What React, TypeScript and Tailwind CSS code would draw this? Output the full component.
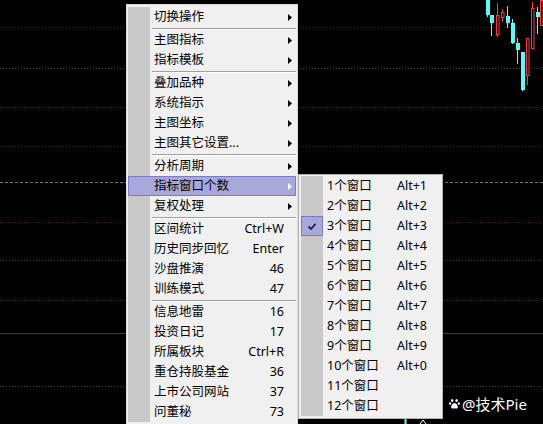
import { Fragment } from "react";

type Item = { label: string; key?: string; sub?: boolean; active?: boolean } | "sep";

const MAIN: Item[] = [
  { label: "切换操作", sub: true },
  "sep",
  { label: "主图指标", sub: true },
  { label: "指标模板", sub: true },
  "sep",
  { label: "叠加品种", sub: true },
  { label: "系统指示", sub: true },
  { label: "主图坐标", sub: true },
  { label: "主图其它设置...", sub: true },
  "sep",
  { label: "分析周期", sub: true },
  { label: "指标窗口个数", sub: true, active: true },
  { label: "复权处理", sub: true },
  "sep",
  { label: "区间统计", key: "Ctrl+W" },
  { label: "历史同步回忆", key: "Enter" },
  { label: "沙盘推演", key: "46" },
  { label: "训练模式", key: "47" },
  "sep",
  { label: "信息地雷", key: "16" },
  { label: "投资日记", key: "17" },
  { label: "所属板块", key: "Ctrl+R" },
  { label: "重仓持股基金", key: "36" },
  { label: "上市公司网站", key: "37" },
  { label: "问董秘", key: "73" },
];

const WINDOWS = [
  ["1个窗口", "Alt+1"], ["2个窗口", "Alt+2"], ["3个窗口", "Alt+3"], ["4个窗口", "Alt+4"],
  ["5个窗口", "Alt+5"], ["6个窗口", "Alt+6"], ["7个窗口", "Alt+7"], ["8个窗口", "Alt+8"],
  ["9个窗口", "Alt+9"], ["10个窗口", "Alt+0"], ["11个窗口", ""], ["12个窗口", ""],
];

// grid lines of the chart behind the menu
const LINES: { y: number; color: string; dash?: string }[] = [
  { y: 27.5, color: "#5a1d22", dash: "1 2" },
  { y: 68.5, color: "#4a4a4a", dash: "1 2" },
  { y: 107.5, color: "#4a3a3c", dash: "1 2" },
  { y: 146.5, color: "#5a1d22", dash: "1 2" },
  { y: 182.5, color: "#777777", dash: "3 2" },
  { y: 222.5, color: "#5a1d22", dash: "1 2" },
  { y: 260.5, color: "#4a3035", dash: "1 2" },
  { y: 300.5, color: "#4a3a3c", dash: "1 2" },
  { y: 333.5, color: "#8a1c2c" },
  { y: 386.5, color: "#4a4040", dash: "1 2" },
];

const CANDLES = [
  { x: 486, wt: 0, wb: 17, bt: 0, bb: 15, up: false },
  { x: 490, wt: 15, wb: 36, bt: 15, bb: 23, up: false },
  { x: 496, wt: 3, wb: 37, bt: 15, bb: 34, up: true },
  { x: 501, wt: 9, wb: 22, bt: 12, bb: 17, up: true },
  { x: 506, wt: 6, wb: 28, bt: 16, bb: 23, up: false },
  { x: 511, wt: 19, wb: 44, bt: 23, bb: 43, up: false },
  { x: 516, wt: 38, wb: 64, bt: 43, bb: 50, up: false },
  { x: 521, wt: 52, wb: 91, bt: 52, bb: 90, up: false },
  { x: 526, wt: 38, wb: 85, bt: 38, bb: 75, up: true },
  { x: 531, wt: 2, wb: 48, bt: 8, bb: 48, up: true },
  { x: 536, wt: 7, wb: 34, bt: 12, bb: 17, up: false },
  { x: 540, wt: 0, wb: 25, bt: 0, bb: 25, up: true },
];

function Arrow({ white }: { white?: boolean }) {
  return (
    <svg width="4" height="7" viewBox="0 0 4 7">
      <path d="M0 0L4 3.5L0 7z" fill={white ? "#ffffff" : "#000000"} />
    </svg>
  );
}

function Chart() {
  return (
    <svg className="absolute inset-0" width="543" height="424" viewBox="0 0 543 424">
      {LINES.map((l) => (
        <line key={l.y} x1="0" x2="543" y1={l.y} y2={l.y} stroke={l.color} strokeWidth="1" strokeDasharray={l.dash} />
      ))}
      {CANDLES.map((c) => {
        const col = c.up ? "#ff3a3a" : "#54ffff";
        return (
          <g key={c.x}>
            <line x1={c.x + 1.5} x2={c.x + 1.5} y1={c.wt} y2={c.wb} stroke={col} strokeWidth="1" />
            {c.up ? (
              <rect x={c.x + 0.5} y={c.bt + 0.5} width="2.5" height={c.bb - c.bt} fill="#000" stroke={col} strokeWidth="1" />
            ) : (
              <rect x={c.x} y={c.bt} width="4" height={c.bb - c.bt} fill={col} />
            )}
          </g>
        );
      })}
      <line x1="405.5" x2="405.5" y1="419" y2="424" stroke="#54ffff" strokeWidth="2" />
      <path d="M420 424L423 420L426 424" fill="none" stroke="#ffffff" strokeWidth="1" />
    </svg>
  );
}

function MainMenu() {
  return (
    <div className="absolute left-[126px] top-[4px] w-[172px] bg-[#f0f0f0] border border-[#d8d8d8] px-px pt-[2px] pb-[3px]">
      {MAIN.map((it, i) => {
        if (it === "sep") {
          return (
            <div key={i} className="flex h-[3px]">
              <div className="w-[22px] bg-[#c9c9c9]" />
              <div className="flex-1 ml-[2px] pt-px">
                <div className="h-px bg-[#a0a0a0]" />
                <div className="h-px bg-white" />
              </div>
            </div>
          );
        }
        return (
          <div key={i} className={`flex h-[20px] items-center leading-[20px] ${it.active ? "bg-[#a9a8da] outline outline-1 -outline-offset-1 outline-[#7b7ac8]" : ""}`}>
            <div className={`w-[22px] h-full ${it.active ? "" : "bg-[#c9c9c9]"}`} />
            <span className="flex-1 pl-[4px] text-black">{it.label}</span>
            {it.key && <span className="text-black">{it.key}</span>}
            <div className="w-[12px] pl-[4px] flex items-center">{it.sub && <Arrow white={it.active} />}</div>
          </div>
        );
      })}
    </div>
  );
}

function SubMenu() {
  return (
    <div className="absolute left-[298px] top-[174px] w-[145px] bg-[#f0f0f0] border border-[#b4b4b4] px-[2px] pt-px pb-[2px]">
      {WINDOWS.map(([label, key], i) => (
        <div key={label} className="flex h-[20px] items-center leading-[20px]">
          <div className="w-[22px] h-full bg-[#c9c9c9] flex items-center justify-center">
            {i === 2 && (
              <div className="w-[22px] h-[20px] bg-[#a9a8da] border border-[#7b7ac8] flex items-center justify-center">
                <svg width="8" height="7" viewBox="0 0 8 7">
                  <path d="M0.5 3.5L3 6L7.5 0.8" fill="none" stroke="#1c1c5c" strokeWidth="1.8" />
                </svg>
              </div>
            )}
          </div>
          <span className="flex-1 pl-[4px] text-black">{label}</span>
          <span className="text-black">{key}</span>
          <div className="w-[13px]" />
        </div>
      ))}
    </div>
  );
}

export default function App() {
  return (
    <div className="relative w-[543px] h-[424px] bg-black overflow-hidden text-[12.5px] font-['Noto_Sans','Noto_Sans_CJK_SC',sans-serif]">
      <Chart />
      <MainMenu />
      <SubMenu />
      <div className="absolute left-[449px] top-[394px] flex items-center gap-[2px] text-white text-[15px] leading-[20px]">
        <svg width="11" height="10" viewBox="0 0 11 10">
          <ellipse cx="3.2" cy="1.6" rx="1.2" ry="1.5" fill="#fff" />
          <ellipse cx="7.6" cy="1.6" rx="1.2" ry="1.5" fill="#fff" />
          <ellipse cx="1.2" cy="4.6" rx="1.1" ry="1.3" fill="#fff" />
          <ellipse cx="9.8" cy="4.6" rx="1.1" ry="1.3" fill="#fff" />
          <path d="M5.5 4C3.6 4 2 7 2.2 8.4C2.4 9.6 3.8 9.6 5.5 9.2C7.2 9.6 8.6 9.6 8.8 8.4C9 7 7.4 4 5.5 4Z" fill="#fff" />
        </svg>
        <span>@技术Pie</span>
      </div>
    </div>
  );
}
